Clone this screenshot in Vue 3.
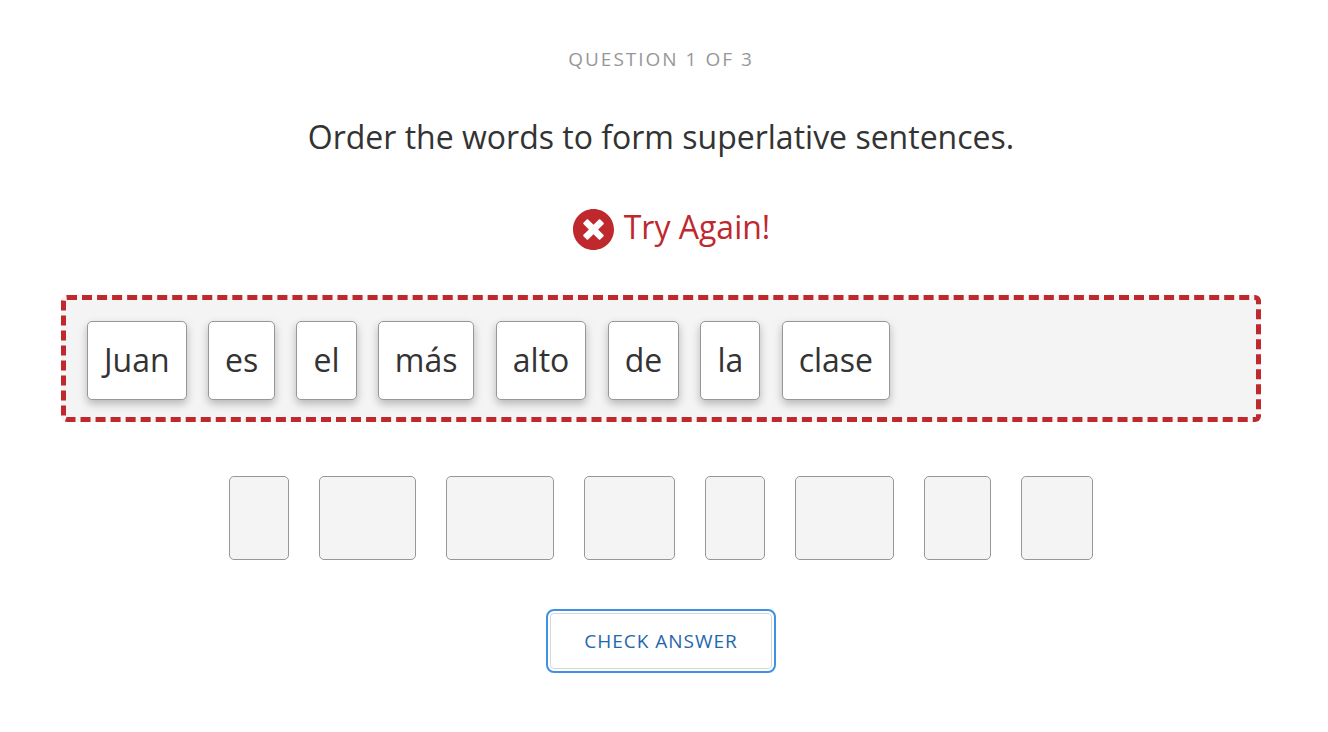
<script setup>
const answer = ['Juan', 'es', 'el', 'más', 'alto', 'de', 'la', 'clase']
const slots = ['el', 'más', 'clase', 'alto', 'la', 'Juan', 'es', 'de']
</script>

<template>
  <main class="quiz">
    <p class="progress">QUESTION 1 OF 3</p>
    <h1 class="prompt">Order the words to form superlative sentences.</h1>
    <p class="feedback" role="status">
      <svg class="mark" viewBox="8 8 496 496" aria-hidden="true">
        <path fill="currentColor" d="M256 8C119 8 8 119 8 256s111 248 248 248 248-111 248-248S393 8 256 8zm121.6 313.1c4.7 4.7 4.7 12.3 0 17L338 377.6c-4.7 4.7-12.3 4.7-17 0L256 312l-65.1 65.6c-4.7 4.7-12.3 4.7-17 0L134.4 338c-4.7-4.7-4.7-12.3 0-17l65.6-65-65.6-65.1c-4.7-4.7-4.7-12.3 0-17l39.6-39.6c4.7-4.7 12.3-4.7 17 0l65 65.7 65.1-65.6c4.7-4.7 12.3-4.7 17 0l39.6 39.6c4.7 4.7 4.7 12.3 0 17L312 256l65.6 65.1z" />
      </svg>
      <span>Try Again!</span>
    </p>
    <div class="answer">
      <template v-for="word in answer" :key="word"><button type="button" class="tile">{{ word }}</button>{{ ' ' }}</template>
    </div>
    <div class="bank">
      <div v-for="word in slots" :key="word" class="slot"><span class="ghost">{{ word }}</span></div>
    </div>
    <button type="button" class="check">CHECK ANSWER</button>
  </main>
</template>

<style>
body {
  background: #fff;
}
</style>

<style scoped>
.quiz {
  box-sizing: border-box;
  display: flex;
  flex-direction: column;
  align-items: center;
  padding: 46px 67px 60px 61px;
  font-family: "Open Sans", "Noto Sans", sans-serif;
  color: #333;
}
.progress {
  margin: 0;
  font-size: 19px;
  line-height: 26px;
  letter-spacing: 2px;
  color: #979797;
}
.prompt {
  margin: 42px 0 0;
  font-size: 32px;
  line-height: 46px;
  font-weight: 400;
  text-align: center;
}
.feedback {
  display: flex;
  align-items: center;
  gap: 10px;
  margin: 44px 0 0 21px;
  font-size: 32px;
  line-height: 46px;
  color: #bf282d;
}
.mark {
  width: 41px;
  height: 41px;
  margin-top: 5px;
}
.answer {
  box-sizing: border-box;
  align-self: stretch;
  margin-top: 45px;
  padding: 21px 21px 17px;
  border: 5px dashed #bf282d;
  border-radius: 6px;
  background: #f4f4f4;
  font-size: 32px;
  line-height: 46px;
}
.tile,
.slot {
  box-sizing: border-box;
  padding: 0 16px 2px;
  border: 1px solid #979797;
  border-radius: 5px;
  font-family: inherit;
  font-size: 32px;
}
.tile {
  height: 79px;
  margin: 0 13px 0 0;
  vertical-align: top;
  background: #fff;
  color: #333;
  box-shadow: 0 4px 8px rgba(0, 0, 0, 0.25);
}
.bank {
  display: flex;
  flex-wrap: wrap;
  justify-content: center;
  gap: 30px;
  margin-top: 54px;
}
.slot {
  height: 84px;
  background: #f4f4f4;
}
.ghost {
  visibility: hidden;
}
.check {
  height: 56px;
  margin-top: 53px;
  padding: 0 33px;
  border: 1px solid #d8d8d8;
  border-radius: 4px;
  outline: 2px solid #4090e4;
  outline-offset: 2px;
  background: #fff;
  font-family: inherit;
  font-size: 19px;
  letter-spacing: 1px;
  color: #1f67ad;
}
</style>
